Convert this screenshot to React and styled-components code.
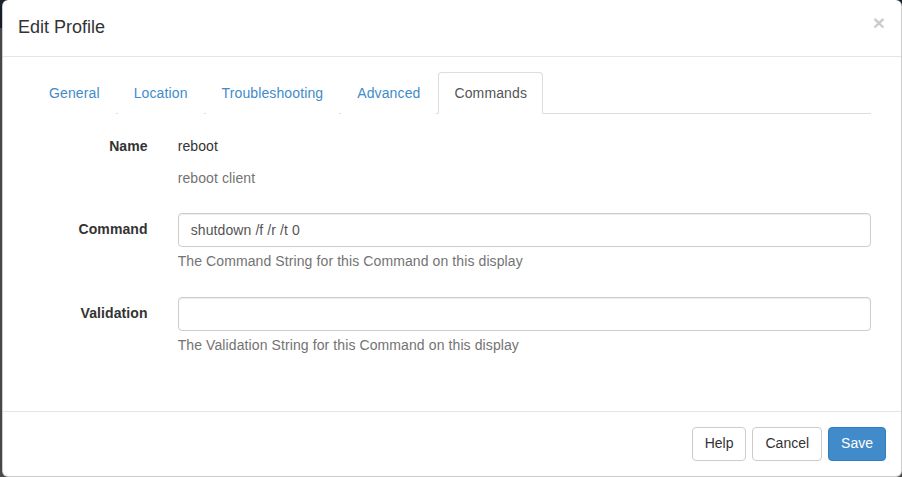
import React from 'react'
import styled, { createGlobalStyle } from 'styled-components'

const GlobalStyle = createGlobalStyle`
  html, body {
    margin: 0;
    padding: 0;
    height: 477px;
    overflow: hidden;
  }
  body {
    font-family: 'Liberation Sans', Arial, sans-serif;
    font-size: 14px;
    line-height: 1.42857;
    letter-spacing: 0.1px;
    color: #333;
    background: linear-gradient(#1c2433 0, #1c2433 28px, #5c5c5c 28px);
  }
  * {
    box-sizing: border-box;
  }
`

const Backdrop = styled.div`
  display: flex;
  padding-left: 2px;
`

const Modal = styled.div`
  width: 900px;
  background: #fff;
  border: 1px solid rgba(0, 0, 0, 0.2);
  border-top: none;
  border-radius: 6px;
  box-shadow: 0 5px 15px rgba(0, 0, 0, 0.5);
`

const Header = styled.div`
  display: flex;
  align-items: flex-start;
  justify-content: space-between;
  padding: 15px 16px 15px 15px;
  border-bottom: 1px solid #e5e5e5;
`

const Title = styled.h4`
  margin: 0;
  font-size: 18px;
  font-weight: 500;
  line-height: 1.42857;
  letter-spacing: 0;
`

const Close = styled.button`
  margin-top: -3px;
  padding: 0;
  border: 0;
  background: transparent;
  font-family: 'Liberation Sans', Arial, sans-serif;
  font-size: 21px;
  font-weight: bold;
  line-height: 1;
  color: #000;
  opacity: 0.2;
  text-shadow: 0 1px 0 #fff;
  cursor: pointer;
`

const Body = styled.div`
  padding: 15px 15px 30px;
`

const TabArea = styled.div`
  padding: 0 15px;
`

const Tabs = styled.ul`
  display: flex;
  margin: 0;
  padding: 0;
  list-style: none;
  border-bottom: 1px solid #ddd;
`

const Tab = styled.li`
  margin-bottom: -1px;
  margin-right: 2px;
`

const TabLink = styled.a`
  display: block;
  padding: 11px 15px 9px;
  line-height: 1.42857;
  letter-spacing: 0.12px;
  border: 1px solid ${p => (p.$active ? '#ddd' : 'transparent')};
  border-bottom-color: transparent;
  border-radius: 4px 4px 0 0;
  background: #fff;
  color: ${p => (p.$active ? '#555' : '#428bca')};
  text-decoration: none;
  cursor: pointer;
`

const Form = styled.form`
  padding-top: 16px;
`

const Group = styled.div`
  display: grid;
  grid-template-columns: 16.6667% 1fr;
  margin-bottom: ${p => (p.$tight ? '14px' : '15px')};
`

const Label = styled.label`
  padding: 7px 15px 0;
  text-align: right;
  font-weight: bold;
`

const Field = styled.div`
  padding: 0 15px;
`

const Static = styled.p`
  margin: 0;
  min-height: 34px;
  padding: 7px 0;
`

const Input = styled.input`
  display: block;
  width: 100%;
  height: 34px;
  padding: 6px 12px;
  font-family: inherit;
  font-size: 14px;
  line-height: 1.42857;
  letter-spacing: 0.1px;
  color: #555;
  background: #fff;
  border: 1px solid #ccc;
  border-radius: 4px;
  box-shadow: inset 0 1px 1px rgba(0, 0, 0, 0.075);
  outline: none;
`

const Help = styled.span`
  display: block;
  margin: 5px 0 10px;
  color: #737373;
`

const Footer = styled.div`
  display: flex;
  justify-content: flex-end;
  gap: 6px;
  padding: 15px;
  border-top: 1px solid #e5e5e5;
`

const Button = styled.button`
  height: 34px;
  padding: 6px 12px;
  font-family: inherit;
  font-size: 14px;
  line-height: 1.42857;
  letter-spacing: 0;
  border: 1px solid ${p => (p.$primary ? '#357ebd' : '#ccc')};
  border-radius: 4px;
  background: ${p => (p.$primary ? '#428bca' : '#fff')};
  color: ${p => (p.$primary ? '#fff' : '#333')};
  cursor: pointer;
`

const tabs = ['General', 'Location', 'Troubleshooting', 'Advanced', 'Commands']

export default function App() {
  return (
    <>
      <GlobalStyle />
      <Backdrop>
        <Modal>
          <Header>
            <Title>Edit Profile</Title>
            <Close type="button">×</Close>
          </Header>
          <Body>
            <TabArea>
              <Tabs>
                {tabs.map(t => (
                  <Tab key={t}>
                    <TabLink $active={t === 'Commands'}>{t}</TabLink>
                  </Tab>
                ))}
              </Tabs>
            </TabArea>
            <Form onSubmit={e => e.preventDefault()}>
              <Group $tight>
                <Label>Name</Label>
                <Field>
                  <Static>reboot</Static>
                  <Help>reboot client</Help>
                </Field>
              </Group>
              <Group>
                <Label>Command</Label>
                <Field>
                  <Input defaultValue="shutdown /f /r /t 0" />
                  <Help>The Command String for this Command on this display</Help>
                </Field>
              </Group>
              <Group>
                <Label>Validation</Label>
                <Field>
                  <Input defaultValue="" />
                  <Help>The Validation String for this Command on this display</Help>
                </Field>
              </Group>
            </Form>
          </Body>
          <Footer>
            <Button type="button">Help</Button>
            <Button type="button">Cancel</Button>
            <Button type="button" $primary>Save</Button>
          </Footer>
        </Modal>
      </Backdrop>
    </>
  )
}
